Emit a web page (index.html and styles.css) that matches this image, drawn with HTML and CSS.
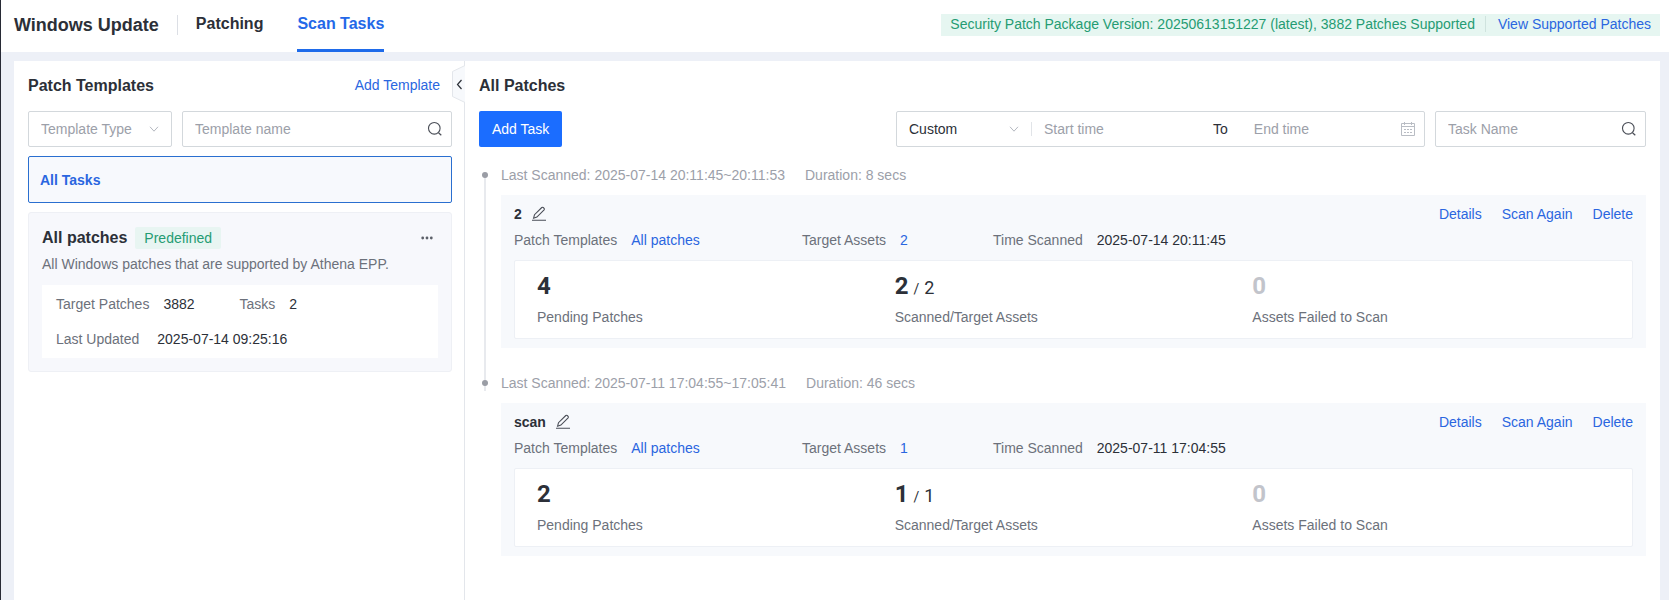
FILE: index.html
```html
<!DOCTYPE html>
<html lang="en">
<head>
  <meta charset="UTF-8">
  <meta name="viewport" content="width=device-width, initial-scale=1.0">
  <title>Windows Update - Scan Tasks</title>
  <link rel="stylesheet" href="styles.css">
</head>
<body>
  <!-- shared icons -->
  <svg class="sprite" width="0" height="0" aria-hidden="true">
    <symbol id="icon-search" viewBox="0 0 16 16">
      <circle cx="7.3" cy="7.3" r="5.8" fill="none" stroke="currentColor" stroke-width="1.1"/>
      <path d="M11.5 11.7l2.8 2.5" fill="none" stroke="currentColor" stroke-width="1.2"/>
    </symbol>
    <symbol id="icon-down" viewBox="0 0 10 10">
      <path d="M1 2.8l4 4.4 4-4.4" fill="none" stroke="currentColor" stroke-width="1"/>
    </symbol>
    <symbol id="icon-edit" viewBox="0 0 16 16">
      <path d="M2.600 12.200l.9-3.500L10.800 1.500q.7-.6 1.400 0l.9.9q.6.700 0 1.400L5.900 11.100zM1 14.300h14" fill="none" stroke="currentColor" stroke-width="1.1"/>
    </symbol>
    <symbol id="icon-calendar" viewBox="0 0 16 16">
      <path d="M1.500 2.500h13v12h-13zM1.500 5.500h13M4.500 1v3M11.500 1v3M4 8.500h2M7 8.500h2M10 8.500h2M4 11.500h2M7 11.500h2M10 11.500h2" fill="none" stroke="currentColor" stroke-width="1"/>
    </symbol>
  </svg>

  <header class="topbar">
    <h1>Windows Update</h1>
    <nav class="tabs">
      <a href="#" class="tab">Patching</a>
      <a href="#" class="tab active">Scan Tasks</a>
    </nav>
    <div class="version">
      <span>Security Patch Package Version: 20250613151227 (latest), 3882 Patches Supported</span>
      <a href="#">View Supported Patches</a>
    </div>
  </header>

  <main class="content">
    <aside class="sidebar">
      <div class="panel-head">
        <h2>Patch Templates</h2>
        <a href="#">Add Template</a>
      </div>
      <button class="collapse" type="button" aria-label="Collapse">
        <svg width="13" height="38" viewBox="0 0 13 38">
          <path d="M13 .5L.5 6.500v25L13 37.500" fill="#f7f9fc" stroke="#e3e6eb"/>
          <path d="M9.500 15l-4 4.500 4 4.500" fill="none" stroke="#2c3038" stroke-width="1.2"/>
        </svg>
      </button>

      <div class="template-filter">
        <div class="field type-field">
          <select aria-label="Template Type" class="placeholder">
            <option>Template Type</option>
          </select>
          <svg class="icon-down"><use href="#icon-down"/></svg>
        </div>
        <div class="field name-field">
          <input type="text" placeholder="Template name" aria-label="Template name">
          <svg class="icon"><use href="#icon-search"/></svg>
        </div>
      </div>

      <button class="all-tasks" type="button">All Tasks</button>

      <section class="template">
        <div class="template-head">
          <h3>All patches</h3>
          <span class="tag">Predefined</span>
          <button class="more" type="button" aria-label="More">
            <svg width="12" height="4" viewBox="0 0 12 4" fill="currentColor">
              <circle cx="1.700" cy="2" r="1.400"/><circle cx="6" cy="2" r="1.400"/><circle cx="10.300" cy="2" r="1.400"/>
            </svg>
          </button>
        </div>
        <p class="template-desc">All Windows patches that are supported by Athena EPP.</p>
        <dl class="template-info">
          <div><dt>Target Patches</dt><dd>3882</dd></div>
          <div><dt>Tasks</dt><dd>2</dd></div>
          <div class="updated"><dt>Last Updated</dt><dd>2025-07-14 09:25:16</dd></div>
        </dl>
      </section>
    </aside>

    <section class="tasks">
      <div class="panel-head">
        <h2>All Patches</h2>
      </div>

      <div class="toolbar">
        <button class="btn-primary" type="button">Add Task</button>
        <div class="field range-field">
          <select aria-label="Time range">
            <option>Custom</option>
          </select>
          <svg class="icon-down"><use href="#icon-down"/></svg>
          <input type="text" class="start" placeholder="Start time" aria-label="Start time">
          <span class="to">To</span>
          <input type="text" class="end" placeholder="End time" aria-label="End time">
          <svg class="icon light"><use href="#icon-calendar"/></svg>
        </div>
        <div class="field task-field">
          <input type="text" placeholder="Task Name" aria-label="Task Name">
          <svg class="icon"><use href="#icon-search"/></svg>
        </div>
      </div>

      <ul class="timeline">
        <li class="entry">
          <p class="entry-time"><span>Last Scanned: 2025-07-14 20:11:45~20:11:53</span><span>Duration: 8 secs</span></p>
          <article class="task">
            <div class="task-head">
              <h3>2</h3>
              <button class="edit" type="button" aria-label="Rename"><svg class="icon"><use href="#icon-edit"/></svg></button>
              <div class="actions"><a href="#">Details</a><a href="#">Scan Again</a><a href="#">Delete</a></div>
            </div>
            <dl class="task-info">
              <div><dt>Patch Templates</dt><dd><a href="#">All patches</a></dd></div>
              <div><dt>Target Assets</dt><dd><a href="#">2</a></dd></div>
              <div><dt>Time Scanned</dt><dd>2025-07-14 20:11:45</dd></div>
            </dl>
            <div class="stats">
              <div class="stat"><p class="num">4</p><p>Pending Patches</p></div>
              <div class="stat"><p class="num">2<small>/</small><span>2</span></p><p>Scanned/Target Assets</p></div>
              <div class="stat"><p class="num zero">0</p><p>Assets Failed to Scan</p></div>
            </div>
          </article>
        </li>
        <li class="entry">
          <p class="entry-time"><span>Last Scanned: 2025-07-11 17:04:55~17:05:41</span><span>Duration: 46 secs</span></p>
          <article class="task">
            <div class="task-head">
              <h3>scan</h3>
              <button class="edit" type="button" aria-label="Rename"><svg class="icon"><use href="#icon-edit"/></svg></button>
              <div class="actions"><a href="#">Details</a><a href="#">Scan Again</a><a href="#">Delete</a></div>
            </div>
            <dl class="task-info">
              <div><dt>Patch Templates</dt><dd><a href="#">All patches</a></dd></div>
              <div><dt>Target Assets</dt><dd><a href="#">1</a></dd></div>
              <div><dt>Time Scanned</dt><dd>2025-07-11 17:04:55</dd></div>
            </dl>
            <div class="stats">
              <div class="stat"><p class="num">2</p><p>Pending Patches</p></div>
              <div class="stat"><p class="num">1<small>/</small><span>1</span></p><p>Scanned/Target Assets</p></div>
              <div class="stat"><p class="num zero">0</p><p>Assets Failed to Scan</p></div>
            </div>
          </article>
        </li>
      </ul>
    </section>
  </main>
</body>
</html>
```
FILE: styles.css
```css
* {
  box-sizing: border-box;
}

body {
  display: flex;
  flex-direction: column;
  min-height: 100vh;
  margin: 0;
  border-left: 1px solid #272a35;
  background: #edf0f7;
  color: #2c3038;
  font-family: "Liberation Sans", Arial, sans-serif;
  font-size: 14px;
  line-height: 20px;
}

h1, h2, h3, p, dl, dd, ul {
  margin: 0;
  padding: 0;
}

h2, h3 {
  font-size: 16px;
}

a {
  color: #2a66e0;
  text-decoration: none;
}

button, input, select {
  margin: 0;
  padding: 0;
  border: 0;
  background: none;
  color: inherit;
  font: inherit;
}

.sprite {
  position: absolute;
}

.icon {
  flex: none;
  width: 16px;
  height: 16px;
  color: #4a4e57;
}

.icon.light {
  color: #b9bdc4;
}

.icon-down {
  flex: none;
  width: 10px;
  height: 10px;
  color: #b4b8c0;
  pointer-events: none;
}

/* top bar */
.topbar {
  display: flex;
  align-items: center;
  height: 52px;
  padding: 0 9px 0 13px;
  background: #fff;
}

.topbar h1 {
  margin-bottom: 2px;
  padding-right: 18px;
  border-right: 1px solid #dcdfe5;
  font-size: 18px;
}

.tabs {
  display: flex;
  gap: 34px;
  margin-left: 18px;
}

.tab {
  height: 52px;
  border-bottom: 3px solid transparent;
  color: #2c3038;
  font-size: 16px;
  font-weight: bold;
  line-height: 48px;
}

.tab.active {
  border-color: #1f6bea;
  color: #2468e8;
}

.version {
  display: flex;
  align-items: center;
  height: 22px;
  margin: 0 0 2px auto;
  padding: 0 9px 2px;
  background: #e6f6f1;
  color: #259c73;
}

.version a {
  margin-left: 10px;
  padding-left: 12px;
  border-left: 1px solid #cfe3de;
  line-height: 16px;
}

/* panels */
.content {
  display: flex;
  flex: 1;
  padding: 9px 9px 0 13px;
}

.sidebar {
  position: relative;
  flex: none;
  width: 451px;
  padding: 15px 12px 0 14px;
  border-right: 1px solid #e3e6eb;
  background: #fff;
}

.tasks {
  flex: 1;
  padding: 15px 14px 0;
  background: #fff;
}

.panel-head {
  display: flex;
  justify-content: space-between;
  margin-bottom: 15px;
}

.panel-head a {
  margin-right: 12px;
  line-height: 18px;
}

.collapse {
  position: absolute;
  top: 4px;
  right: -1px;
  width: 13px;
  height: 38px;
}

.collapse svg {
  display: block;
}

.field {
  display: flex;
  align-items: center;
  height: 36px;
  padding: 0 8px 0 12px;
  border: 1px solid #d3d8dc;
  border-radius: 2px;
}

.field input {
  flex: 1;
  min-width: 0;
  height: 20px;
  outline: none;
}

.field input::placeholder {
  color: #9ca0a9;
}

.field select {
  flex: 1;
  min-width: 0;
  height: 20px;
  appearance: none;
  outline: none;
}

.field .placeholder {
  color: #9ca0a9;
}

/* left side */
.template-filter {
  display: flex;
  gap: 10px;
  margin-bottom: 9px;
}

.type-field {
  width: 144px;
  padding-right: 12px;
}

.name-field {
  flex: 1;
}

.all-tasks {
  display: block;
  width: 100%;
  height: 47px;
  margin-bottom: 9px;
  padding: 0 11px;
  border: 1px solid #2a6fd0;
  border-radius: 2px;
  background: #f7f9fd;
  color: #2a66e0;
  font-weight: bold;
  text-align: left;
}

.template {
  padding: 14px 13px 13px;
  border: 1px solid #eef0f5;
  border-radius: 3px;
  background: #f7f8fc;
}

.template-head {
  display: flex;
  align-items: center;
  margin-bottom: 5px;
}

.tag {
  margin-left: 8px;
  padding: 1px 9px;
  border-radius: 2px;
  background: #e8f5f2;
  color: #259c73;
}

.more {
  display: flex;
  align-items: center;
  height: 20px;
  margin: 0 5px 0 auto;
  color: #5c6069;
}

.template-desc {
  margin-bottom: 11px;
  color: #6c717b;
}

.template-info {
  display: flex;
  flex-wrap: wrap;
  gap: 15px 45px;
  padding: 9px 14px;
  background: #fff;
}

.template-info div,
.task-info div {
  display: flex;
  gap: 14px;
}

.template-info .updated {
  flex-basis: 100%;
  gap: 18px;
}

dt {
  color: #6c717b;
}

/* toolbar */
.toolbar {
  display: flex;
  gap: 10px;
}

.btn-primary {
  height: 36px;
  margin-right: auto;
  padding: 0 13px;
  border-radius: 2px;
  background: #1b6dff;
  color: #fff;
}

.range-field {
  width: 529px;
}

.range-field select {
  flex: none;
  width: 100px;
}

.field .start {
  flex: none;
  width: 182px;
  height: 14px;
  margin-left: 12px;
  padding-left: 12px;
  border-left: 1px solid #e1e4e8;
}

.range-field .to {
  margin-right: 26px;
}

.task-field {
  width: 211px;
}

/* timeline */
.timeline {
  margin-top: 18px;
  list-style: none;
}

.entry {
  position: relative;
  padding: 0 0 25px 22px;
}

.entry::before {
  content: "";
  position: absolute;
  top: 10px;
  bottom: -10px;
  left: 5px;
  width: 2px;
  background: #e8eaee;
}

.entry:last-child::before {
  height: 8px;
}

.entry::after {
  content: "";
  position: absolute;
  top: 7px;
  left: 3px;
  width: 6px;
  height: 6px;
  border-radius: 50%;
  background: #9a9da5;
}

.entry-time {
  display: flex;
  gap: 20px;
  margin-bottom: 10px;
  color: #9ca0a9;
}

.task {
  padding: 8px 13px 9px;
  background: #f7f9fc;
}

.task-head {
  display: flex;
  align-items: center;
  height: 22px;
  margin-bottom: 5px;
}

.task-head h3 {
  font-size: 14px;
}

.edit {
  margin-left: 9px;
  line-height: 0;
}

.actions {
  display: flex;
  gap: 20px;
  margin-left: auto;
}

.task-info {
  display: flex;
  margin-bottom: 10px;
}

.task-info div:nth-child(1) {
  width: 288px;
}

.task-info div:nth-child(2) {
  width: 191px;
}

.stats {
  display: grid;
  grid-template-columns: repeat(3, 1fr);
  padding: 13px 22px 11px;
  border: 1px solid #edf0f5;
  border-radius: 2px;
  background: #fff;
}

.stat {
  color: #6c717b;
}

.num {
  display: flex;
  align-items: baseline;
  gap: 5px;
  height: 24px;
  margin-bottom: 9px;
  color: #2c3038;
  font-family: Roboto, "Liberation Sans", sans-serif;
  font-size: 24px;
  font-weight: bold;
  line-height: 24px;
}

.num span {
  font-size: 18px;
  font-weight: normal;
}

.num small {
  font-size: 14px;
  font-weight: normal;
}

.num.zero {
  color: #c2c4cb;
}
```
